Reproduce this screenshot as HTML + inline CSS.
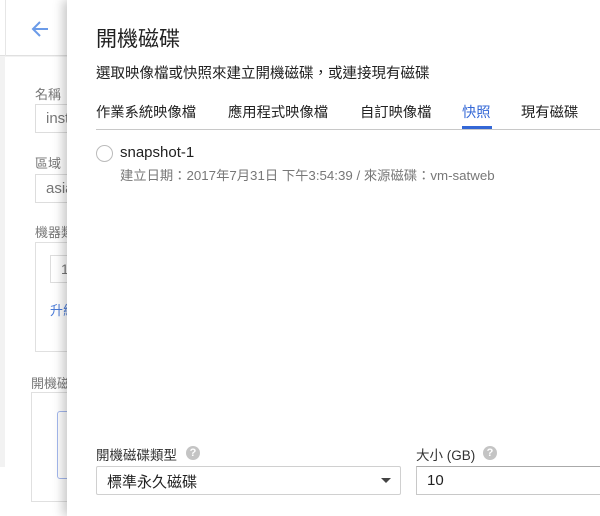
<!DOCTYPE html>
<html><head><meta charset="utf-8"><style>
*{margin:0;padding:0;box-sizing:border-box}
body{width:600px;height:516px;overflow:hidden;position:relative;background:#f2f2f2;font-family:"Liberation Sans","Noto Sans CJK TC",sans-serif;color:#212121}
.a{position:absolute}
</style></head><body>
<div class="a" style="left:0;top:0;width:600px;height:56px;background:#fff;border-bottom:1px solid #e0e0e0"></div>
<div class="a" style="left:5px;top:0;width:1px;height:56px;background:#e6e6e6"></div>
<svg class="a" style="left:28px;top:17px" width="24" height="24" viewBox="0 0 24 24"><path d="M20 12H5M12 5l-7 7 7 7" fill="none" stroke="#6b9be8" stroke-width="2"/></svg>
<div class="a" style="left:5px;top:57px;width:595px;height:410px;background:#fff"></div>
<div class="a" style="left:0;top:467px;width:600px;height:49px;background:#fff"></div>
<div class="a" style="left:35px;top:84px;font-size:13px;color:#777">名稱</div>
<div class="a" style="left:35px;top:104px;width:60px;height:29px;border:1px solid #ddd;font-size:15px;color:#777;padding:5px 10px">inst</div>
<div class="a" style="left:35px;top:153px;font-size:13px;color:#777">區域</div>
<div class="a" style="left:35px;top:174px;width:60px;height:29px;border:1px solid #ddd;font-size:15px;color:#777;padding:5px 10px">asia</div>
<div class="a" style="left:35px;top:222px;font-size:13px;color:#777">機器類型</div>
<div class="a" style="left:35px;top:242px;width:60px;height:110px;border:1px solid #e0e0e0"></div>
<div class="a" style="left:50px;top:255px;width:40px;height:28px;border:1px solid #ddd;font-size:14px;color:#777;padding:5px 10px">1</div>
<div class="a" style="left:50px;top:300px;font-size:13px;color:#4a7bd8">升級</div>
<div class="a" style="left:31px;top:373px;font-size:13px;color:#777">開機磁碟</div>
<div class="a" style="left:31px;top:392px;width:60px;height:110px;border:1px solid #e0e0e0"></div>
<div class="a" style="left:57px;top:411px;width:30px;height:68px;border:1px solid #a4b8ee;border-radius:3px"></div>
<div class="a" style="left:67px;top:0;width:533px;height:516px;background:#fff;box-shadow:-4px 0 10px rgba(0,0,0,.22)"></div>
<div class="a" style="left:96px;top:23px;font-size:21px;color:#212121">開機磁碟</div>
<div class="a" style="left:96px;top:62px;font-size:14.5px;white-space:nowrap">選取映像檔或快照來建立開機磁碟，或連接現有磁碟</div>
<div class="a" style="left:96px;top:101px;font-size:14.3px;white-space:nowrap">作業系統映像檔</div>
<div class="a" style="left:228px;top:101px;font-size:14.3px;white-space:nowrap">應用程式映像檔</div>
<div class="a" style="left:360px;top:101px;font-size:14.3px;white-space:nowrap">自訂映像檔</div>
<div class="a" style="left:462px;top:101px;font-size:14.3px;color:#3367d6">快照</div>
<div class="a" style="left:521px;top:101px;font-size:14.3px;white-space:nowrap">現有磁碟</div>
<div class="a" style="left:96px;top:129px;width:504px;height:1px;background:#c8c8c8"></div>
<div class="a" style="left:462px;top:126px;width:30px;height:3px;background:#3367d6"></div>
<div class="a" style="left:96px;top:145px;width:17px;height:17px;border:1.5px solid #bbb;border-radius:50%"></div>
<div class="a" style="left:120px;top:144px;font-size:15px">snapshot-1</div>
<div class="a" style="left:120px;top:165px;font-size:13.3px;color:#777;white-space:nowrap">建立日期：2017年7月31日 下午3:54:39 / 來源磁碟：vm-satweb</div>
<div class="a" style="left:96px;top:444px;font-size:13.5px;color:#333">開機磁碟類型</div>
<div class="a" style="left:186px;top:446px;width:14px;height:14px;border-radius:50%;background:#c4c4c4;color:#fff;font-size:11px;font-weight:bold;text-align:center;line-height:14px">?</div>
<div class="a" style="left:96px;top:466px;width:305px;height:29px;border:1px solid #d0d0d0;border-radius:2px;font-size:15px;padding:4px 10px">標準永久磁碟</div>
<div class="a" style="left:381px;top:478px;width:0;height:0;border-left:5px solid transparent;border-right:5px solid transparent;border-top:5px solid #444"></div>
<div class="a" style="left:416px;top:444px;font-size:13.5px;color:#333">大小 (GB)</div>
<div class="a" style="left:483px;top:446px;width:14px;height:14px;border-radius:50%;background:#c4c4c4;color:#fff;font-size:11px;font-weight:bold;text-align:center;line-height:14px">?</div>
<div class="a" style="left:416px;top:466px;width:190px;height:29px;border:1px solid #c8c8c8;border-top-color:#aaa;font-size:15px;padding:5px 10px">10</div>
</body></html>
